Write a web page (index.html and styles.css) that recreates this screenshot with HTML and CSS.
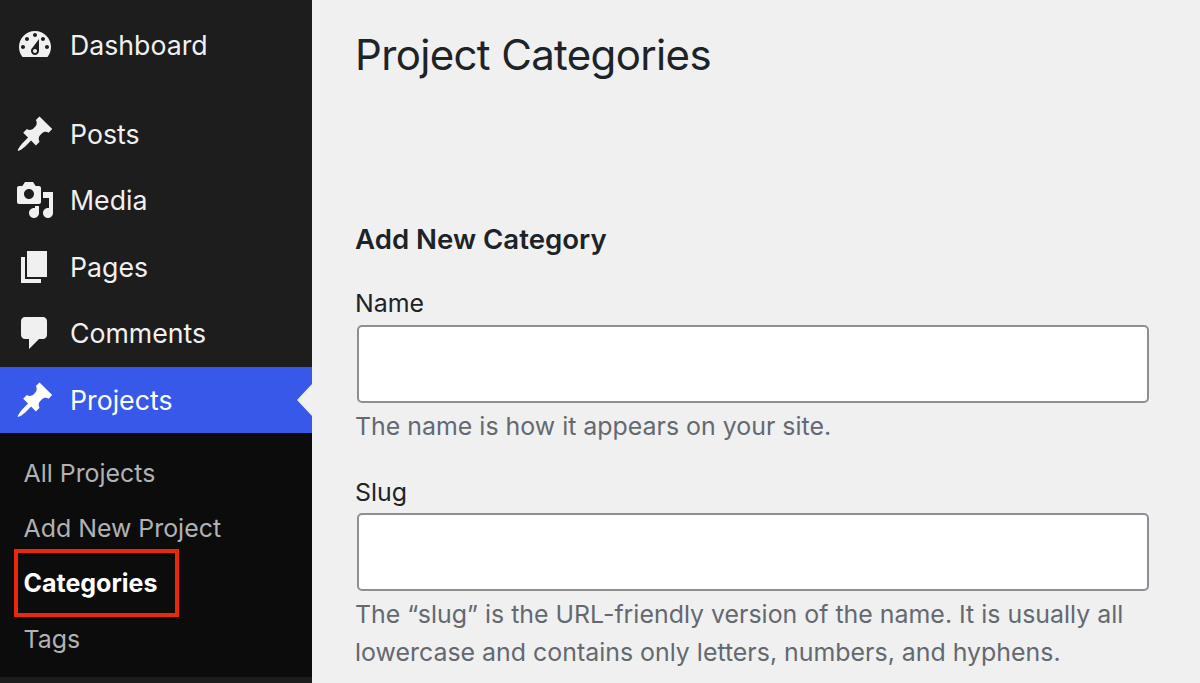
FILE: index.html
```html
<!DOCTYPE html>
<html lang="en">
<head>
    <meta charset="UTF-8">
    <meta name="viewport" content="width=device-width, initial-scale=1.0">
    <title>Project Categories</title>
    <link rel="stylesheet" href="styles.css">
</head>
<body>
    <div class="sidebar">
        <a class="menu-item dashboard-item">
            <svg class="menu-icon" viewBox="0 0 20 20"><path d="M3.76 16h12.48c1.1-1.37 1.76-3.11 1.76-5 0-4.42-3.58-8-8-8s-8 3.58-8 8c0 1.89.66 3.63 1.76 5zM10 4c.55 0 1 .45 1 1s-.45 1-1 1-1-.45-1-1 .45-1 1-1zM6 6c.55 0 1 .45 1 1s-.45 1-1 1-1-.45-1-1 .45-1 1-1zm8 0c.55 0 1 .45 1 1s-.45 1-1 1-1-.45-1-1 .45-1 1-1zm-5.37 5.55L12 7v6c0 1.1-.9 2-2 2s-2-.9-2-2c0-.57.24-1.08.63-1.45zM4 10c.55 0 1 .45 1 1s-.45 1-1 1-1-.45-1-1 .45-1 1-1zm12 0c.55 0 1 .45 1 1s-.45 1-1 1-1-.45-1-1 .45-1 1-1zm-5 3c0-.55-.45-1-1-1s-1 .45-1 1 .45 1 1 1 1-.45 1-1z"/></svg>
            Dashboard
        </a>
        <a class="menu-item">
            <svg class="menu-icon" viewBox="0 0 20 20"><path d="M10.44 3.02l1.82-1.82 6.36 6.35-1.83 1.82c-1.05-.68-2.48-.57-3.41.36l-.75.75c-.92.93-1.04 2.35-.35 3.41l-1.83 1.82-2.41-2.41-2.8 2.79c-.42.42-3.38 2.71-3.8 2.29s1.86-3.39 2.28-3.81l2.79-2.79L4.1 9.36l1.83-1.82c1.05.69 2.48.57 3.4-.36l.75-.75c.93-.92 1.05-2.35.36-3.41z"/></svg>
            Posts
        </a>
        <a class="menu-item">
            <svg class="menu-icon" viewBox="0 0 20 20"><path d="M13 11V4c0-.55-.45-1-1-1h-1.67L9 1H5L3.67 3H2c-.55 0-1 .45-1 1v7c0 .55.45 1 1 1h10c.55 0 1-.45 1-1zM7 4.5c1.38 0 2.5 1.12 2.5 2.5S8.38 9.5 7 9.5 4.5 8.38 4.5 7 5.62 4.5 7 4.5zM14 6h5v10.5c0 1.38-1.12 2.5-2.5 2.5S14 17.88 14 16.5s1.12-2.5 2.5-2.5c.17 0 .34.02.5.05V9h-3V6zm-4 8.05V13h2v3.5c0 1.38-1.12 2.5-2.5 2.5S7 17.88 7 16.5 8.12 14 9.5 14c.17 0 .34.02.5.05z"/></svg>
            Media
        </a>
        <a class="menu-item">
            <svg class="menu-icon" viewBox="0 0 20 20"><path d="M6 15V2h10v13H6zm-1 1h8v2H3V5h2v11z"/></svg>
            Pages
        </a>
        <a class="menu-item">
            <svg class="menu-icon" viewBox="0 0 20 20"><path d="M5 2h9c1.1 0 2 .9 2 2v7c0 1.1-.9 2-2 2h-2l-5 5v-5H5c-1.1 0-2-.9-2-2V4c0-1.1.9-2 2-2z"/></svg>
            Comments
        </a>
        <a class="menu-item current">
            <svg class="menu-icon" viewBox="0 0 20 20"><path d="M10.44 3.02l1.82-1.82 6.36 6.35-1.83 1.82c-1.05-.68-2.48-.57-3.41.36l-.75.75c-.92.93-1.04 2.35-.35 3.41l-1.83 1.82-2.41-2.41-2.8 2.79c-.42.42-3.38 2.71-3.8 2.29s1.86-3.39 2.28-3.81l2.79-2.79L4.1 9.36l1.83-1.82c1.05.69 2.48.57 3.4-.36l.75-.75c.93-.92 1.05-2.35.36-3.41z"/></svg>
            Projects
        </a>
        <div class="submenu">
            <a class="sub-item">All Projects</a>
            <a class="sub-item">Add New Project</a>
            <a class="sub-item active">Categories</a>
            <a class="sub-item">Tags</a>
        </div>
    </div>

    <div class="content">
        <h1>Project Categories</h1>
        <h2>Add New Category</h2>

        <div class="form-field">
            <label for="tagName">Name</label>
            <input type="text" id="tagName">
            <p>The name is how it appears on your site.</p>
        </div>

        <div class="form-field">
            <label for="tagSlug">Slug</label>
            <input type="text" id="tagSlug">
            <p>The “slug” is the URL-friendly version of the name. It is usually all lowercase and contains only letters, numbers, and hyphens.</p>
        </div>
    </div>
</body>
</html>
```

FILE: styles.css
```css
* {
    margin: 0;
    padding: 0;
    box-sizing: border-box;
}

html, body {
    height: 683px;
    overflow: hidden;
}

body {
    display: flex;
    background-color: #f0f0f1;
    color: #1d2327;
    font-family: Inter, 'Noto Sans', sans-serif;
}

.sidebar {
    width: 312px;
    flex-shrink: 0;
    background-color: #1d1d1d;
    padding-top: 12px;
}

.menu-item {
    position: relative;
    display: flex;
    align-items: center;
    gap: 15px;
    height: 66.6px;
    padding-left: 15px;
    color: #f0f0f1;
    font-size: 26.7px;
}

.dashboard-item {
    margin-bottom: 21.8px;
}

.menu-icon {
    width: 40px;
    height: 40px;
    flex-shrink: 0;
    fill: #f0f0f1;
}

.menu-item.current {
    background-color: #3858e9;
    color: #ffffff;
}

.menu-item.current .menu-icon {
    fill: #ffffff;
}

/* little arrow pointing at the content area */
.menu-item.current::after {
    content: "";
    position: absolute;
    right: 0;
    top: 50%;
    margin-top: -16px;
    border-style: solid;
    border-width: 16px 15px 16px 0;
    border-color: transparent #f0f0f1 transparent transparent;
}

.submenu {
    display: flex;
    flex-direction: column;
    height: 244px;
    padding-top: 12px;
    background-color: #0c0c0c;
}

.sub-item {
    position: relative;
    display: flex;
    align-items: center;
    height: 55.2px;
    padding-left: 23.5px;
    color: #b0b2b4;
    font-size: 24.9px;
}

.sub-item.active {
    color: #ffffff;
    font-size: 25px;
    font-weight: 700;
}

/* red annotation box */
.sub-item.active::after {
    content: "";
    position: absolute;
    box-sizing: border-box;
    left: 14px;
    top: -6.9px;
    width: 165px;
    height: 68px;
    border: 4.5px solid #e8290b;
}

.content {
    flex: 1;
    padding: 28px 51px 0 44px;
}

h1 {
    font-size: 42px;
    font-weight: 400;
    letter-spacing: -0.65px;
    line-height: 54px;
    margin-bottom: 138px;
    margin-left: -1px;
}

h2 {
    font-size: 27.6px;
    font-weight: 600;
    line-height: 38px;
    margin-bottom: 28px;
    margin-left: -1px;
}

.form-field {
    margin-bottom: 30px;
}

.form-field label {
    display: block;
    font-size: 24.9px;
    line-height: 34px;
    margin-bottom: 5px;
    margin-left: -1px;
}

.form-field + .form-field label {
    margin-bottom: 4px;
}

.form-field input {
    display: block;
    width: 792px;
    height: 77.5px;
    margin-left: 1px;
    background-color: #ffffff;
    border: 2px solid #8c8f94;
    border-radius: 5px;
}

.form-field p {
    margin-top: 4.5px;
    margin-left: -1px;
    color: #646970;
    font-size: 24.92px;
    line-height: 38px;
}
```
